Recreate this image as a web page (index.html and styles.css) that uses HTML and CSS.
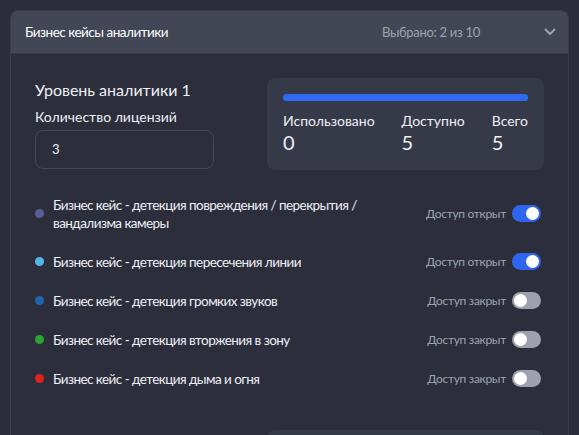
FILE: index.html
```html
<!DOCTYPE html>
<html lang="ru">
<head>
  <meta charset="UTF-8" />
  <title>Бизнес кейсы аналитики</title>
  <link rel="stylesheet" href="styles.css">
</head>
<body>

  <div class="panel">
    <div class="panel-header">
      <span class="panel-title">Бизнес кейсы аналитики</span>
      <span class="panel-summary">
        Выбрано: 2 из 10
        <svg class="chevron" width="12" height="8" viewBox="0 0 12 8">
          <path d="M1.5 1.5 L6 6 L10.5 1.5" fill="none" stroke="#9ea3b0" stroke-width="1.8" stroke-linecap="round" stroke-linejoin="round"/>
        </svg>
      </span>
    </div>

    <div class="panel-body">
      <div class="level">
        <div class="level-info">
          <div class="level-title">Уровень аналитики 1</div>
          <label class="field-label">Количество лицензий</label>
          <div class="field-input">3</div>
        </div>
        <div class="stats-card">
          <div class="progress"><div class="progress-fill" style="width: 100%"></div></div>
          <div class="stats">
            <div class="stat">
              <div class="stat-label">Использовано</div>
              <div class="stat-value">0</div>
            </div>
            <div class="stat">
              <div class="stat-label">Доступно</div>
              <div class="stat-value">5</div>
            </div>
            <div class="stat">
              <div class="stat-label">Всего</div>
              <div class="stat-value">5</div>
            </div>
          </div>
        </div>
      </div>

      <div class="case-list">
        <div class="case">
          <span class="dot dot-purple"></span>
          <span class="case-name">Бизнес кейс - детекция повреждения / перекрытия / вандализма камеры</span>
          <span class="access">Доступ открыт</span>
          <span class="toggle on"><span class="knob"></span></span>
        </div>
        <div class="case">
          <span class="dot dot-sky"></span>
          <span class="case-name">Бизнес кейс - детекция пересечения линии</span>
          <span class="access">Доступ открыт</span>
          <span class="toggle on"><span class="knob"></span></span>
        </div>
        <div class="case">
          <span class="dot dot-blue"></span>
          <span class="case-name">Бизнес кейс - детекция громких звуков</span>
          <span class="access">Доступ закрыт</span>
          <span class="toggle"><span class="knob"></span></span>
        </div>
        <div class="case">
          <span class="dot dot-green"></span>
          <span class="case-name">Бизнес кейс - детекция вторжения в зону</span>
          <span class="access">Доступ закрыт</span>
          <span class="toggle"><span class="knob"></span></span>
        </div>
        <div class="case">
          <span class="dot dot-red"></span>
          <span class="case-name">Бизнес кейс - детекция дыма и огня</span>
          <span class="access">Доступ закрыт</span>
          <span class="toggle"><span class="knob"></span></span>
        </div>
      </div>

      <div class="level">
        <div class="level-info"></div>
        <div class="stats-card"></div>
      </div>
    </div>
  </div>

</body>
</html>
```

FILE: styles.css
```css
body {
  font-family: 'Lato', 'Noto Sans', sans-serif;
  background: #2b2d3a;
  margin: 0;
  padding: 10px 10px 0;
  color: #eef0f4;
}

.panel {
  border: 1px solid #3a3d4b;
  border-bottom: none;
  border-radius: 8px 8px 0 0;
  overflow: hidden;
}

.panel-header {
  height: 42px;
  background: #424655;
  border-bottom: 1px solid #363949;
  display: flex;
  align-items: center;
  justify-content: space-between;
  padding: 0 12px 0 14px;
}

.panel-title {
  font-size: 13.5px;
  letter-spacing: -0.5px;
  color: #ffffff;
}

.panel-summary {
  font-size: 13px;
  letter-spacing: -0.3px;
  color: #9ea3b0;
  display: flex;
  align-items: center;
}

.chevron {
  margin-left: 64px;
}

.panel-body {
  background: #2c2e3c;
  padding: 24px 24px 0;
}

.level {
  display: grid;
  grid-template-columns: 1fr 277px;
  gap: 53px;
}

.level-title {
  font-size: 16px;
  margin-top: 2px;
  margin-bottom: 9px;
}

.field-label {
  display: block;
  font-size: 14px;
  margin-bottom: 5px;
}

.field-input {
  height: 37px;
  border: 1px solid #454858;
  border-radius: 8px;
  font-size: 13px;
  line-height: 37px;
  padding-left: 16px;
}

.stats-card {
  background: #363947;
  border-radius: 8px;
  padding: 16px;
  height: 60px;
}

.progress {
  height: 7px;
  border-radius: 4px;
  background: #4a4e5e;
}

.progress-fill {
  height: 100%;
  border-radius: 4px;
  background: #2f6bf2;
}

.stats {
  display: flex;
  justify-content: space-between;
  margin-top: 11px;
}

.stat-label {
  font-size: 14px;
}

.stat-value {
  font-size: 20px;
  margin-top: 1px;
}

.case-list {
  margin: 15px 3px 32px 0;
}

.case {
  display: flex;
  align-items: center;
  padding: 10.5px 0;
}

.case-name {
  font-size: 13.5px;
  letter-spacing: -0.55px;
  line-height: 18px;
  flex: 1;
  max-width: 350px;
  margin-right: auto;
}

.dot {
  width: 9px;
  height: 9px;
  border-radius: 50%;
  margin-right: 9px;
  flex-shrink: 0;
}

.dot-purple { background: #5a5e98; }
.dot-sky { background: #54b6e4; }
.dot-blue { background: #1f66b0; }
.dot-green { background: #2aa42f; }
.dot-red { background: #e0231a; }

.access {
  font-size: 12px;
  letter-spacing: -0.3px;
  color: #9ea3b0;
  margin-right: 6px;
}

.toggle {
  width: 29px;
  height: 17px;
  border-radius: 9px;
  background: #9ca1ab;
  position: relative;
  flex-shrink: 0;
}

.toggle.on {
  background: #2f66f0;
}

.knob {
  position: absolute;
  top: 2px;
  left: 2px;
  width: 13px;
  height: 13px;
  border-radius: 50%;
  background: #ffffff;
}

.toggle.on .knob {
  left: 14px;
}
```
